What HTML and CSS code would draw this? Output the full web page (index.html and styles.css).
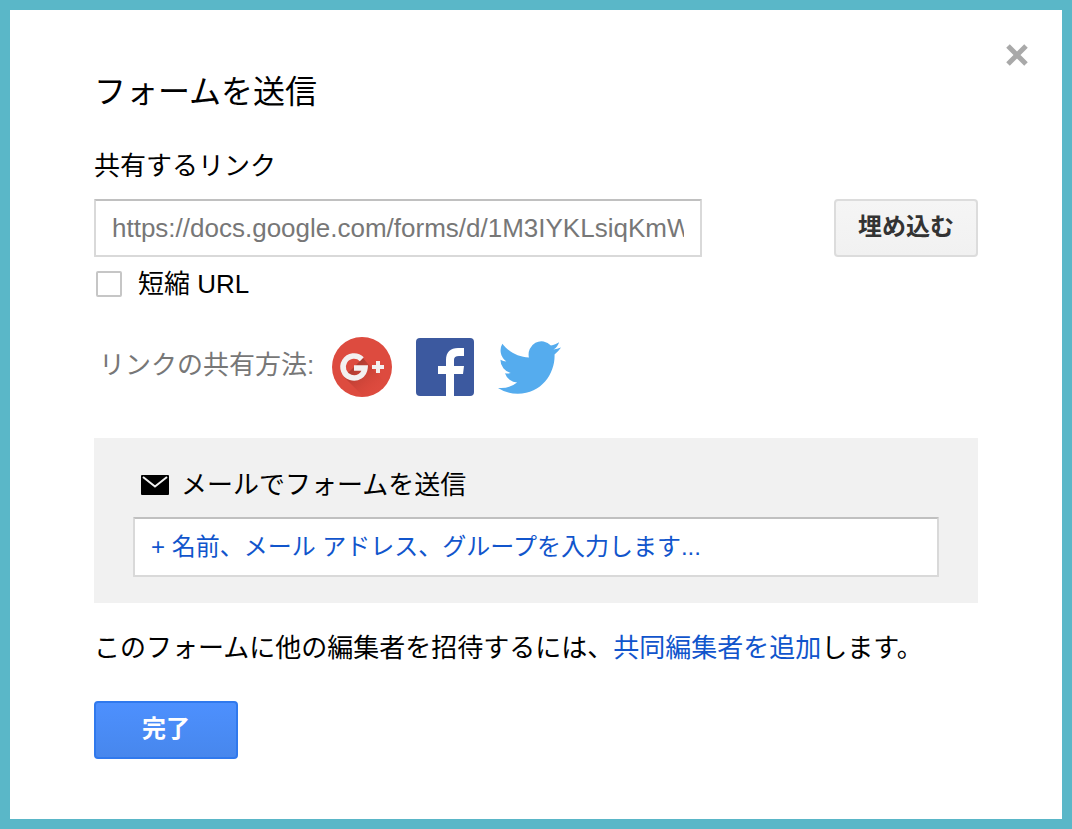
FILE: index.html
```html
<!DOCTYPE html>
<html lang="ja">
<head>
    <meta charset="UTF-8">
    <meta name="viewport" content="width=device-width, initial-scale=1.0">
    <title>フォームを送信</title>
    <link rel="stylesheet" href="styles.css">
</head>
<body>
    <div class="dialog" role="dialog" aria-labelledby="dialog-title">
        <div class="dialog-top">
            <button type="button" class="close-button" aria-label="閉じる">
                <svg width="22" height="22" viewBox="0 0 22 22"><path d="M2 2L20 20M20 2L2 20" stroke="#a9a9a9" stroke-width="5"/></svg>
            </button>
        </div>

        <form class="dialog-body">
            <h1 id="dialog-title">フォームを送信</h1>

            <label class="field-label" for="link">共有するリンク</label>
            <div class="link-row">
                <input type="text" id="link" class="text-field link-field" value="https://docs.google.com/forms/d/1M3IYKLsiqKmW" readonly>
                <button type="button" class="button button-standard">埋め込む</button>
            </div>

            <div class="short-url">
                <input type="checkbox" id="short-url">
                <label for="short-url">短縮 URL</label>
            </div>

            <div class="share-row">
                <span class="share-label">リンクの共有方法:</span>
                <a href="#" aria-label="Google+">
                    <svg width="60" height="60" viewBox="0 0 60 60">
                        <defs>
                            <clipPath id="disc"><circle cx="30" cy="30" r="30"/></clipPath>
                            <linearGradient id="shade" x1="0" y1="0" x2="1" y2="1">
                                <stop offset="0.2" stop-color="#a93a30"/>
                                <stop offset="0.8" stop-color="#db4437" stop-opacity="0"/>
                            </linearGradient>
                        </defs>
                        <circle cx="30" cy="30" r="30" fill="#dd4b3f"/>
                        <path d="M12 40L31 21L36 27L56 48L40 60H32Z" fill="url(#shade)" clip-path="url(#disc)"/>
                        <path d="M29.800 22.200A11 11 0 1 0 33 31H22" fill="none" stroke="#f3f0f0" stroke-width="5.500"/>
                        <path d="M46 24V36M40 30H52" stroke="#f3f0f0" stroke-width="4"/>
                    </svg>
                </a>
                <a href="#" aria-label="Facebook">
                    <svg width="58" height="58" viewBox="0 0 58 58">
                        <rect width="58" height="58" rx="4" fill="#3c599f"/>
                        <path d="M30 58V36H22V28H30V22C30 14 34.500 10 42 10H48V18H43C39.500 18 38 19.500 38 22V28H48L47 36H38V58Z" fill="#fff"/>
                    </svg>
                </a>
                <a href="#" aria-label="Twitter">
                    <svg width="63" height="54" viewBox="0 1.8 24 20" preserveAspectRatio="none">
                        <path fill="#55acee" d="M23.953 4.57a10 10 0 01-2.825.775 4.958 4.958 0 002.163-2.723c-.951.555-2.005.959-3.127 1.184a4.92 4.92 0 00-8.384 4.482C7.69 8.095 4.067 6.13 1.64 3.162a4.822 4.822 0 00-.666 2.475c0 1.71.87 3.213 2.188 4.096a4.904 4.904 0 01-2.228-.616v.06a4.923 4.923 0 003.946 4.827 4.996 4.996 0 01-2.212.085 4.936 4.936 0 004.604 3.417 9.867 9.867 0 01-6.102 2.105c-.39 0-.779-.023-1.17-.067a13.995 13.995 0 007.557 2.209c9.053 0 13.998-7.496 13.998-13.985 0-.21 0-.42-.015-.63A9.935 9.935 0 0024 4.59z"/>
                    </svg>
                </a>
            </div>

            <div class="mail-box">
                <label class="mail-label" for="recipients">
                    <svg width="28" height="20" viewBox="0 0 28 20">
                        <rect width="28" height="20" rx="1" fill="#000"/>
                        <path d="M2 2L14 11.500L26 2" fill="none" stroke="#f1f1f1" stroke-width="2"/>
                    </svg>
                    メールでフォームを送信
                </label>
                <input type="text" id="recipients" class="text-field recipients-field" placeholder="+ 名前、メール アドレス、グループを入力します...">
            </div>

            <p class="invite">このフォームに他の編集者を招待するには、<a href="#">共同編集者を追加</a>します。</p>

            <button type="submit" class="button button-action">完了</button>
        </form>
    </div>
</body>
</html>
```

FILE: styles.css
```css
* {
    box-sizing: border-box;
}
body {
    margin: 0;
    background-color: #fff;
    color: #000;
    font-family: "Liberation Sans", Arial, "Noto Sans CJK JP", sans-serif;
    font-size: 26px;
    line-height: 40px;
}
input, button {
    font-family: inherit;
}
svg {
    display: block;
}
a {
    color: #15c;
    text-decoration: none;
}
.dialog {
    min-height: 100vh;
    border: 10px solid #5ab7c8;
}
.dialog-top {
    display: flex;
    justify-content: flex-end;
    padding: 34px 34px 0;
}
.close-button {
    padding: 0;
    border: none;
    background: none;
    cursor: pointer;
}
.dialog-body {
    padding: 0 84px 50px;
}
h1 {
    margin: 2px 0 30px;
    font-size: 32px;
    font-weight: normal;
    line-height: 48px;
}
.field-label {
    display: block;
    margin-bottom: 13px;
}
.link-row {
    display: flex;
    gap: 132px;
}
.text-field {
    height: 58px;
    padding: 0 16px;
    border: 2px solid #d9d9d9;
    border-top-color: #c0c0c0;
    border-radius: 1px;
    background-color: #fff;
    outline: none;
}
.link-field {
    flex: 1;
    min-width: 0;
    color: #777;
    font-size: 26px;
}
.button {
    width: 144px;
    height: 58px;
    padding: 0 0 8px;
    border-radius: 4px;
    font-size: 24px;
    font-weight: bold;
    cursor: pointer;
}
.button-standard {
    border: 2px solid #dcdcdc;
    background: linear-gradient(#f5f5f5, #f1f1f1);
    color: #333;
}
.button-action {
    border: 2px solid #3079ed;
    background: linear-gradient(#4d90fe, #4787ed);
    color: #fff;
}
.short-url {
    display: flex;
    align-items: center;
    gap: 16px;
    margin: 7px 0 33px;
    padding-left: 2px;
}
.short-url input {
    appearance: none;
    width: 26px;
    height: 26px;
    margin: 0;
    border: 2px solid #c6c6c6;
    border-radius: 2px;
    background-color: #fff;
}
.short-url input:checked {
    background-color: #4d90fe;
}
.share-row {
    display: flex;
    align-items: center;
    gap: 24px;
    padding-left: 5px;
}
.share-label {
    margin-right: -6px;
    padding-bottom: 4px;
    color: #777;
}
.mail-box {
    margin-top: 41px;
    padding: 27px 39px 26px;
    background-color: #f1f1f1;
}
.mail-label {
    display: flex;
    align-items: center;
    gap: 12px;
    margin-bottom: 12px;
    padding-left: 8px;
}
.recipients-field {
    width: 100%;
    height: 60px;
    font-size: 24px;
}
.recipients-field::placeholder {
    color: #15c;
    opacity: 1;
}
.invite {
    margin: 25px 0 33px;
}
```
